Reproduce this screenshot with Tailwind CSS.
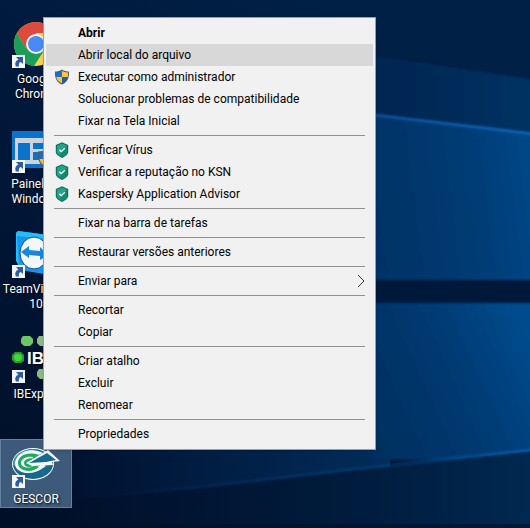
<!DOCTYPE html>
<html lang="pt-BR">
<head>
    <meta charset="UTF-8">
    <meta name="viewport" content="width=device-width, initial-scale=1.0">
    <title>Área de trabalho</title>
    <script src="https://cdn.jsdelivr.net/npm/@tailwindcss/browser@4"></script>
</head>
<body class="relative h-screen overflow-hidden bg-[#00122e] font-['Roboto','Open_Sans',sans-serif] text-xs">
    <!-- Wallpaper -->
    <svg class="absolute inset-0 w-full h-full" viewBox="0 0 530 528" preserveAspectRatio="xMaxYMin slice" aria-hidden="true">
        <defs>
            <linearGradient id="sky" x1="0" y1="1" x2="0.6" y2="0">
                <stop offset="0" stop-color="#000f27"/>
                <stop offset="0.6" stop-color="#00183a"/>
                <stop offset="1" stop-color="#002046"/>
            </linearGradient>
            <linearGradient id="haze" gradientUnits="userSpaceOnUse" x1="370" y1="0" x2="530" y2="0">
                <stop offset="0" stop-color="#002550"/>
                <stop offset="1" stop-color="#003262"/>
            </linearGradient>
            <linearGradient id="paneTop" gradientUnits="userSpaceOnUse" x1="370" y1="200" x2="530" y2="180">
                <stop offset="0" stop-color="#003366"/>
                <stop offset="0.6" stop-color="#003b73"/>
                <stop offset="1" stop-color="#004786"/>
            </linearGradient>
            <linearGradient id="paneBottom" gradientUnits="userSpaceOnUse" x1="340" y1="440" x2="540" y2="350">
                <stop offset="0" stop-color="#002c5a"/>
                <stop offset="0.6" stop-color="#003a72"/>
                <stop offset="1" stop-color="#004c8e"/>
            </linearGradient>
            <linearGradient id="glow" gradientUnits="userSpaceOnUse" x1="75" y1="0" x2="400" y2="0">
                <stop offset="0" stop-color="#001230"/>
                <stop offset="0.5" stop-color="#002046"/>
                <stop offset="1" stop-color="#002e5c"/>
            </linearGradient>
            <linearGradient id="floor" gradientUnits="userSpaceOnUse" x1="60" y1="0" x2="530" y2="0">
                <stop offset="0" stop-color="#00102a"/>
                <stop offset="0.6" stop-color="#001b3c"/>
                <stop offset="1" stop-color="#002850"/>
            </linearGradient>
            <linearGradient id="beam" gradientUnits="userSpaceOnUse" x1="370" y1="0" x2="530" y2="0">
                <stop offset="0" stop-color="#0a4f98"/>
                <stop offset="1" stop-color="#0c66bd"/>
            </linearGradient>
            <linearGradient id="beamLow" gradientUnits="userSpaceOnUse" x1="100" y1="0" x2="530" y2="0">
                <stop offset="0" stop-color="#0a559c" stop-opacity="0"/>
                <stop offset="0.6" stop-color="#0a4a8c" stop-opacity=".4"/>
                <stop offset="1" stop-color="#0a5cab" stop-opacity=".8"/>
            </linearGradient>
            <filter id="soft" x="-5%" y="-20%" width="110%" height="140%"><feGaussianBlur stdDeviation="1"/></filter>
        </defs>
        <rect width="530" height="528" fill="url(#sky)"/>
        <path d="M340 51L550 82V140L340 112Z" fill="url(#haze)" filter="url(#soft)"/>
        <path d="M340 111L550 137V280H340Z" fill="url(#paneTop)" filter="url(#soft)"/>
        <path d="M340 111L550 136" stroke="url(#beam)" stroke-width="3" filter="url(#soft)"/>
        <rect x="340" y="281" width="190" height="21" fill="#00183a"/>
        <path d="M75 430H390V500H75Z" fill="url(#glow)"/>
        <path d="M370 303H550V460H370Z" fill="url(#paneBottom)" filter="url(#soft)"/>
        <path d="M60 501L200 488L330 473L420 463L550 449V540H60Z" fill="url(#floor)"/>
        <path d="M100 497L200 487L330 472L420 462L550 448" fill="none" stroke="url(#beamLow)" stroke-width="3" filter="url(#soft)"/>
        <rect y="524" width="530" height="4" fill="#001128" opacity=".6"/>
    </svg>

    <svg class="hidden" aria-hidden="true">
        <symbol id="arrow" viewBox="0 0 13 13">
            <rect width="13" height="13" fill="#f4f6fa"/>
            <path d="M4 2H11V9L8.800 7C7 7.500 6.500 9 7 11.500H4C2.500 8.500 3.500 6 6.500 4.500Z" fill="#2d5c9e"/>
        </symbol>
        <symbol id="uac" viewBox="0 0 16 16">
            <path d="M8 .5C10 2 12.500 2.500 15 2.500C15.500 9 13 13.500 8 15.500C3 13.500 .500 9 1 2.500C3.500 2.500 6 2 8 .5Z" fill="#4e5a60"/>
            <path d="M8 1.800V8H2.200C1.900 6.500 1.900 5 2 3.500C4.500 3.400 6.500 2.900 8 1.800Z" fill="#1d6fc4"/>
            <path d="M8 1.800V8H13.800C14.100 6.500 14.100 5 14 3.500C11.500 3.400 9.500 2.900 8 1.800Z" fill="#fdc243"/>
            <path d="M2.200 8H8V14.300C4.800 12.900 2.800 10.800 2.200 8Z" fill="#fdc243"/>
            <path d="M13.800 8H8V14.300C11.200 12.900 13.200 10.800 13.800 8Z" fill="#1d5fae"/>
        </symbol>
        <symbol id="kav" viewBox="0 0 16 16">
            <path d="M8 .2L14.200 3V10C14.200 12.500 11 14.500 8 16C5 14.500 1.800 12.500 1.800 10V3Z" fill="#12705c"/>
            <path d="M8 1.500L13 3.700V9.700C13 12 10.500 13.700 8 14.700C5.500 13.700 3 12 3 9.700V3.700Z" fill="#1fa588"/>
            <path d="M13 3.700V9.700C13 12 10.500 13.700 8 14.700L5 13L12 4Z" fill="#168a71"/>
            <path d="M5.300 7.800L7.300 9.700L10.800 6.200" fill="none" stroke="#fff" stroke-width="1.300"/>
        </symbol>
    </svg>

    <!-- Desktop shortcuts -->
    <nav class="relative grid w-[72px] auto-rows-[105px] pt-[19px] text-center leading-[15px] text-white text-shadow-[1px_1px_2px_#000]" aria-label="Atalhos">
        <a href="#" class="flex flex-col items-center pt-px">
            <svg class="w-12 h-12 mb-1 shrink-0" viewBox="0 0 48 48" aria-hidden="true">
                <circle cx="24" cy="24" r="22" fill="#fbd14b"/>
                <path d="M24 24L5 13A22 22 0 0 1 43 13H24Z" fill="#dd4b3e"/>
                <path d="M5 13A22 22 0 0 0 22 46L33 29L14 28Z" fill="#1a9f5b"/>
                <path d="M5 13L14.500 29L24 13Z" fill="#dd4b3e"/>
                <circle cx="24" cy="24" r="10" fill="#f3f3f3"/>
                <circle cx="24" cy="24" r="8" fill="#4a8af4"/>
                <use href="#arrow" y="35" width="13" height="13"/>
            </svg>
            <span>Google<br>Chrome</span>
        </a>
        <a href="#" class="flex flex-col items-center pt-px">
            <svg class="w-12 h-12 mb-1 shrink-0" viewBox="0 0 48 48" aria-hidden="true">
                <rect y="6" width="48" height="37" fill="#0a74cc"/>
                <rect x="3" y="13" width="42" height="26" fill="#cdd3d9"/>
                <rect x="6" y="18" width="12" height="17" fill="#0a74cc"/>
                <rect x="21" y="18" width="24" height="6" fill="#0a74cc"/>
                <rect x="21" y="27" width="24" height="8" fill="#0a74cc"/>
                <use href="#uac" x="23" y="23" width="25" height="22"/>
                <use href="#arrow" y="35" width="13" height="13"/>
            </svg>
            <span>Painel do<br>Windows</span>
        </a>
        <a href="#" class="flex flex-col items-center pt-px">
            <svg class="w-12 h-12 mb-1 shrink-0" viewBox="0 0 48 48" aria-hidden="true">
                <path d="M6 1L44 6V45L32 44L14 41L6 37C4 25 4 13 4 3Z" fill="#1496ee"/>
                <path d="M6 1L44 6V10L5 6L7 35L4 31V3Z" fill="#27bdf8"/>
                <ellipse cx="22" cy="23" rx="14" ry="16" fill="#f4f7fa" stroke="#0b4a9c"/>
                <path d="M9 22L17 16V20L28 21V17L36 25L28 30V26L17 25V28Z" fill="#1787e0"/>
                <use href="#arrow" y="35" width="13" height="13"/>
            </svg>
            <span>TeamViewer<br>10</span>
        </a>
        <a href="#" class="flex flex-col items-center pt-px">
            <svg class="w-12 h-12 mb-1 shrink-0" viewBox="0 0 48 48" aria-hidden="true">
                <path d="M11 1H18L21 4V8L18 11H12L9 8V4Z" fill="#6cc864"/>
                <path d="M27 1H34L37 4V8L34 11H28L25 8V4Z" fill="#8dbb88"/>
                <path d="M3 17H9L12 20V26L9 28H3L0 25V20Z" fill="#2d9a2d"/>
                <path d="M4 19H8L10 21V24L8 26H4L2 24V21Z" fill="#41d63e"/>
                <path d="M27 34H34L37 37V41L34 44H28L25 41V37Z" fill="#8dbb88"/>
                <text x="15" y="29" font-family="Liberation Sans" font-weight="bold" font-size="17" fill="#fff">IBE</text>
                <use href="#arrow" y="35" width="13" height="13"/>
            </svg>
            <span>IBExpert</span>
        </a>
        <a href="#" class="flex h-[69px] flex-col items-center border border-[#6483a4] bg-[#3d5a7b]">
            <svg class="w-12 h-12 mb-1 shrink-0" viewBox="0 0 48 48" aria-hidden="true">
                <ellipse cx="21" cy="24" rx="21" ry="16" fill="#f4fafa"/>
                <ellipse cx="21" cy="24" rx="20" ry="15" fill="#17688c"/>
                <path d="M1 25C2 14 13 8 26 10C18 11 8 14 5 26Z" fill="#4ba4a4"/>
                <path d="M31 13C17 6 3 14 3 24C3 33 20 37 31 28L34 26L20 18Z" fill="#f4fafa"/>
                <path d="M27 15C15 11 6 16 6 23C6 31 19 34 27 27L24 25C16 30 9 27 9 23C9 18 17 15 25 18Z" fill="#20a95e"/>
                <path d="M24 19C17 17 12 20 12 23C12 27 17 28 22 26L28 26V23H17Z" fill="#20a95e"/>
                <path d="M14 23L36 10L48 21L40 22L41 25L20 26Z" fill="#f4fafa"/>
                <path d="M17 23L35 13L44 20L34 22Z" fill="#17688c"/>
                <use href="#arrow" y="35" width="13" height="13"/>
            </svg>
            <span>GESCOR</span>
        </a>
    </nav>

    <!-- Context menu -->
    <div role="menu" class="absolute left-[43px] top-[17px] w-[333px] border border-[#97a0a8] bg-[#f1f1f1] px-[2px] py-1 text-black shadow-sm">
        <button role="menuitem" class="flex h-[22px] w-full items-center pl-8 font-bold">Abrir</button>
        <button role="menuitem" class="flex h-[22px] w-full items-center bg-[#d8d8d8] pl-8">Abrir local do arquivo</button>
        <button role="menuitem" class="flex h-[22px] w-full items-center gap-2 pl-2"><svg class="w-4 h-4" aria-hidden="true"><use href="#uac"/></svg>Executar como administrador</button>
        <button role="menuitem" class="flex h-[22px] w-full items-center pl-8">Solucionar problemas de compatibilidade</button>
        <button role="menuitem" class="flex h-[22px] w-full items-center pl-8">Fixar na Tela Inicial</button>
        <hr class="mx-2 my-[3px] border-[#909090]">
        <button role="menuitem" class="flex h-[22px] w-full items-center gap-2 pl-2"><svg class="w-4 h-4" aria-hidden="true"><use href="#kav"/></svg>Verificar Vírus</button>
        <button role="menuitem" class="flex h-[22px] w-full items-center gap-2 pl-2"><svg class="w-4 h-4" aria-hidden="true"><use href="#kav"/></svg>Verificar a reputação no KSN</button>
        <button role="menuitem" class="flex h-[22px] w-full items-center gap-2 pl-2"><svg class="w-4 h-4" aria-hidden="true"><use href="#kav"/></svg>Kaspersky Application Advisor</button>
        <hr class="mx-2 my-[3px] border-[#909090]">
        <button role="menuitem" class="flex h-[22px] w-full items-center pl-8">Fixar na barra de tarefas</button>
        <hr class="mx-2 my-[3px] border-[#909090]">
        <button role="menuitem" class="flex h-[22px] w-full items-center pl-8">Restaurar versões anteriores</button>
        <hr class="mx-2 my-[3px] border-[#909090]">
        <button role="menuitem" aria-haspopup="menu" class="flex h-[22px] w-full items-center justify-between pl-8 pr-2">
            Enviar para
            <svg class="w-2 h-4" viewBox="0 0 8 16" fill="none" stroke="#333" aria-hidden="true"><path d="M1 2L7 8L1 14"/></svg>
        </button>
        <hr class="mx-2 my-[3px] border-[#909090]">
        <button role="menuitem" class="flex h-[22px] w-full items-center pl-8">Recortar</button>
        <button role="menuitem" class="flex h-[22px] w-full items-center pl-8">Copiar</button>
        <hr class="mx-2 my-[3px] border-[#909090]">
        <button role="menuitem" class="flex h-[22px] w-full items-center pl-8">Criar atalho</button>
        <button role="menuitem" class="flex h-[22px] w-full items-center pl-8">Excluir</button>
        <button role="menuitem" class="flex h-[22px] w-full items-center pl-8">Renomear</button>
        <hr class="mx-2 my-[3px] border-[#909090]">
        <button role="menuitem" class="flex h-[22px] w-full items-center pl-8">Propriedades</button>
    </div>
</body>
</html>
